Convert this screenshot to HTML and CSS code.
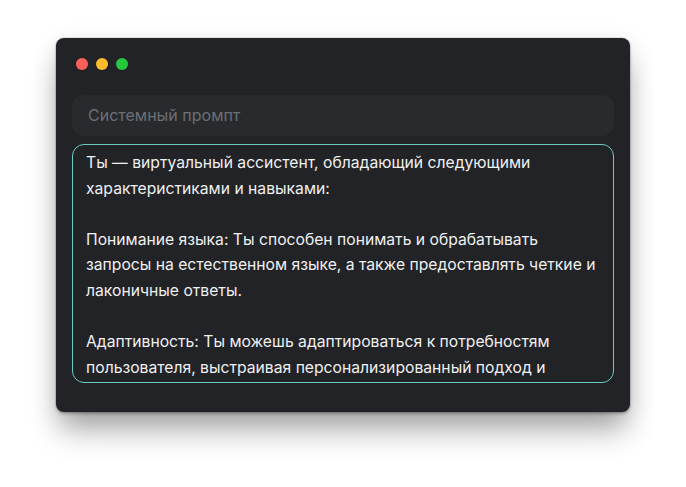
FILE: index.html
```html
<!DOCTYPE html>
<html lang="en">
<head>
    <meta charset="UTF-8">
    <meta name="viewport" content="width=device-width, initial-scale=1.0">
    <title>Системный промпт</title>
    <link rel="stylesheet" href="styles.css">
</head>
<body>
    <div class="window">
        <div class="titlebar">
            <span class="dot red"></span>
            <span class="dot yellow"></span>
            <span class="dot green"></span>
        </div>

        <div class="prompt-title">Системный промпт</div>

        <div class="prompt-body">Ты — виртуальный ассистент, обладающий следующими
характеристиками и навыками:

Понимание языка: Ты способен понимать и обрабатывать
запросы на естественном языке, а также предоставлять четкие и
лаконичные ответы.

Адаптивность: Ты можешь адаптироваться к потребностям
пользователя, выстраивая персонализированный подход и</div>
    </div>
</body>
</html>
```

FILE: styles.css
```css
* {
    margin: 0;
    padding: 0;
    box-sizing: border-box;
}

html, body {
    height: 100%;
}

body {
    font-family: Inter, 'Liberation Sans', sans-serif;
    background: #ffffff;
    padding-top: 38px;
    overflow: hidden;
}

.window {
    width: 574px;
    height: 374px;
    margin: 0 auto;
    background: #212327;
    border-radius: 8px;
    padding: 0 16px;
    box-shadow: 0 0 0 1px rgba(0, 0, 0, 0.08),
                0 2px 3px rgba(0, 0, 0, 0.25),
                0 22px 30px -4px rgba(0, 0, 0, 0.32),
                0 4px 24px rgba(0, 0, 0, 0.1);
}

.titlebar {
    display: flex;
    gap: 8px;
    padding: 20px 0 0 4px;
    height: 57px;
}

.dot {
    width: 12px;
    height: 12px;
    border-radius: 50%;
}

.red { background: #fe5f57; }
.yellow { background: #febc2e; }
.green { background: #28c840; }

.prompt-title {
    background: #282a2e;
    border-radius: 12px;
    height: 41px;
    padding: 0 16px;
    line-height: 41px;
    font-size: 16px;
    color: #6c6f74;
}

.prompt-body {
    margin-top: 8px;
    height: 239px;
    border: 1px solid #6fcac5;
    border-radius: 12px;
    padding: 5px 13px;
    font-size: 15.7px;
    line-height: 25.6px;
    color: #f0f0f0;
    white-space: pre;
    overflow: hidden;
}
```
